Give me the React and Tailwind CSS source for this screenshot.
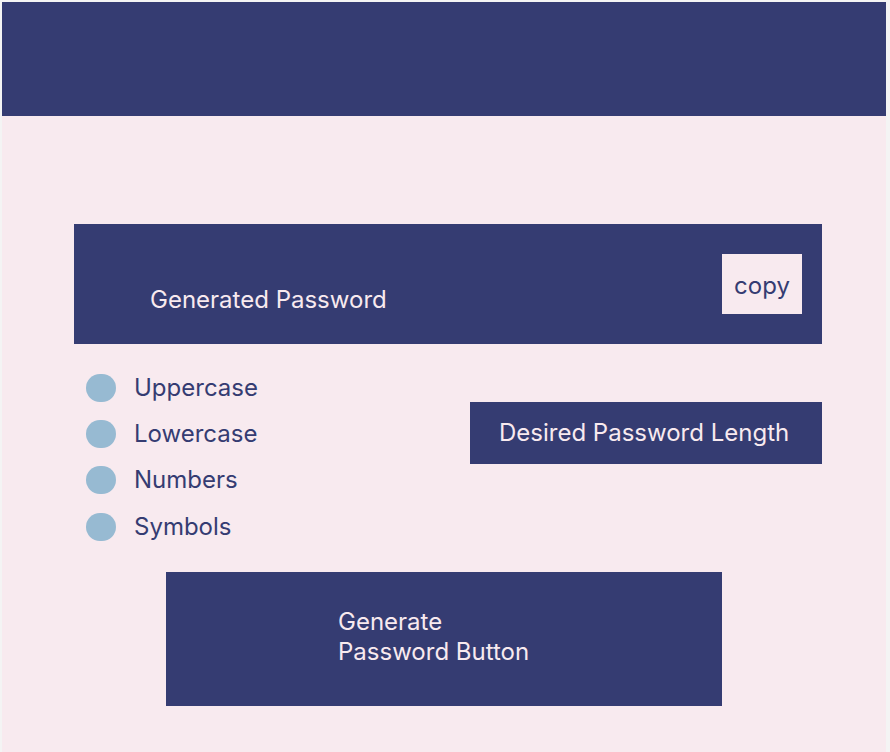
import React, { useState } from 'react';

const options = ['Uppercase', 'Lowercase', 'Numbers', 'Symbols'];

const App = () => {
  const [checked, setChecked] = useState({});

  return (
    <div className="bg-[#f4f4f4] pt-[2px] pl-[2px] pr-[4px] font-['Inter',sans-serif]">
      <div className="bg-[#f8eaef] min-h-[750px]">
        {/* Header */}
        <header className="h-[114px] bg-[#353c72]" />

        <main className="pl-[72px] pr-[64px] pt-[108px]">
          {/* Password output */}
          <div className="h-[120px] bg-[#353c72] flex items-center justify-between pl-[76px] pr-[20px]">
            <span className="mt-[32px] text-[24px] leading-[30px] text-[#f8eaef]">Generated Password</span>
            <button className="w-[80px] h-[60px] bg-[#f8eaef] text-[#353c72] text-[24px] leading-[30px] pt-[4px]">
              copy
            </button>
          </div>

          <div className="flex justify-between mt-[30px]">
            {/* Options */}
            <ul className="pl-[12px] flex flex-col gap-[18px]">
              {options.map((opt) => (
                <li key={opt} className="flex items-center h-[28px] last:mt-[1px]">
                  <button
                    onClick={() => setChecked({ ...checked, [opt]: !checked[opt] })}
                    className="w-[30px] h-[28px] rounded-full bg-[#97bad2]"
                  />
                  <span className="ml-[18px] text-[24px] leading-[30px] text-[#353c72]">{opt}</span>
                </li>
              ))}
            </ul>

            {/* Length */}
            <div className="mt-[28px] w-[352px] h-[62px] bg-[#353c72] flex items-center pl-[29px]">
              <span className="text-[24px] leading-[30px] text-[#f8eaef]">Desired Password Length</span>
            </div>
          </div>

          {/* Generate */}
          <button className="mt-[31px] ml-[92px] w-[556px] h-[134px] bg-[#353c72] flex flex-col justify-center items-start pl-[172px] pb-[4px] text-left">
            <span className="text-[24px] leading-[30px] text-[#f8eaef]">Generate</span>
            <span className="text-[24px] leading-[30px] text-[#f8eaef]">Password Button</span>
          </button>
        </main>
      </div>
    </div>
  );
};

export default App;
